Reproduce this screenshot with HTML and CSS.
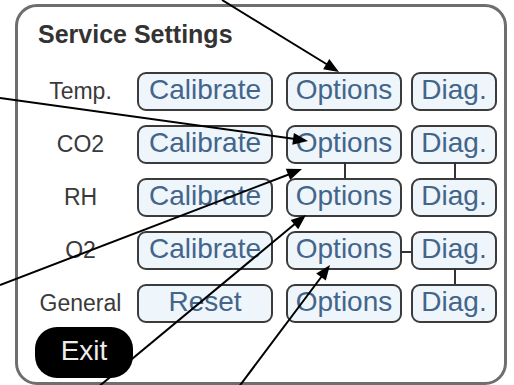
FILE: index.html
```html
<!DOCTYPE html>
<html>
<head>
<meta charset="utf-8">
<link rel="stylesheet" href="styles.css">
</head>
<body>
<div class="panel">
  <h1 class="title">Service Settings</h1>
  <div class="rows">
    <div class="row">
      <span class="label">Temp.</span>
      <span class="btn btn-cal">Calibrate</span>
      <span class="btn btn-opt">Options</span>
      <span class="btn btn-diag">Diag.</span>
    </div>
    <div class="row">
      <span class="label">CO2</span>
      <span class="btn btn-cal">Calibrate</span>
      <span class="btn btn-opt link-down">Options</span>
      <span class="btn btn-diag link-down">Diag.</span>
    </div>
    <div class="row">
      <span class="label">RH</span>
      <span class="btn btn-cal">Calibrate</span>
      <span class="btn btn-opt">Options</span>
      <span class="btn btn-diag">Diag.</span>
    </div>
    <div class="row">
      <span class="label">O2</span>
      <span class="btn btn-cal">Calibrate</span>
      <span class="btn btn-opt link-right">Options</span>
      <span class="btn btn-diag link-down">Diag.</span>
    </div>
    <div class="row">
      <span class="label">General</span>
      <span class="btn btn-cal">Reset</span>
      <span class="btn btn-opt">Options</span>
      <span class="btn btn-diag">Diag.</span>
    </div>
  </div>
  <div class="exit">Exit</div>
</div>
<svg class="arrows" width="514" height="385" viewBox="0 0 514 385">
  <g stroke="#000" stroke-width="2" fill="none">
    <line x1="222" y1="0" x2="328" y2="65"/>
    <line x1="0" y1="98" x2="295" y2="139"/>
    <line x1="0" y1="285" x2="290" y2="174"/>
    <line x1="97" y1="388" x2="296" y2="223"/>
    <line x1="238" y1="388" x2="322" y2="276"/>
  </g>
  <g fill="#000">
    <polygon points="339,72 323.1,69.2 329.3,59"/>
    <polygon points="308,141 292.3,144.8 293.9,133"/>
    <polygon points="302,169 290.2,180 285.8,168.8"/>
    <polygon points="306,215 298.2,229.2 290.6,220"/>
    <polygon points="330,265 325.8,280.6 316.2,273.4"/>
  </g>
</svg>
</body>
</html>
```
FILE: styles.css
```css
html, body {
  margin: 0;
  padding: 0;
  background: #fff;
}
body {
  width: 514px;
  height: 385px;
  overflow: hidden;
  position: relative;
  font-family: "Liberation Sans", Arial, sans-serif;
}
.panel {
  box-sizing: border-box;
  margin: 4px 0 0 15px;
  width: 492px;
  height: 381px;
  border: 3px solid #6e6e6e;
  border-radius: 22px;
  padding: 13px 0 0 20px;
  background: #fff;
}
.title {
  margin: 0 0 23px 0;
  font-size: 25px;
  line-height: 29px;
  font-weight: bold;
  color: #333;
}
.rows {
  display: flex;
  flex-direction: column;
  gap: 14px;
}
.row {
  display: flex;
  align-items: center;
  height: 39px;
}
.label {
  width: 85px;
  text-align: center;
  font-size: 23px;
  color: #3a3a3a;
}
.btn {
  position: relative;
  box-sizing: border-box;
  height: 39px;
  display: flex;
  align-items: center;
  justify-content: center;
  padding-bottom: 4px;
  border: 2px solid #3b3b3b;
  border-radius: 9px;
  background: #eef5fb;
  color: #44658a;
  font-size: 28px;
  line-height: 1;
}
.btn-cal {
  width: 136px;
  margin-left: 14px;
}
.btn-opt {
  width: 116px;
  margin-left: 13px;
}
.btn-diag {
  width: 86px;
  margin-left: 9px;
}
.link-down::after {
  content: "";
  position: absolute;
  left: 50%;
  top: 100%;
  width: 2px;
  height: 16px;
  background: #333;
}
.link-right::after {
  content: "";
  position: absolute;
  left: 100%;
  top: 50%;
  width: 11px;
  height: 2px;
  background: #333;
}
.exit {
  margin: 4px 0 0 -3px;
  width: 98px;
  height: 51px;
  border-radius: 22px;
  background: #000;
  color: #ececec;
  font-size: 28px;
  display: flex;
  align-items: center;
  justify-content: center;
  padding-bottom: 3px;
  box-sizing: border-box;
}
.arrows {
  position: absolute;
  left: 0;
  top: 0;
}
```
